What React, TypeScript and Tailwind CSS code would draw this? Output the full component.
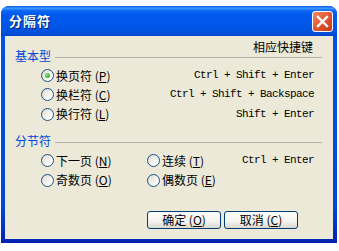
import React from "react";

const cjk = { fontFamily: "'Noto Sans CJK SC', 'Liberation Sans', sans-serif" };
const mono = { fontFamily: "'Liberation Mono', monospace" };

function Radio({ checked }: { checked?: boolean }) {
  return (
    <span className="w-[13px] h-[13px] shrink-0 rounded-full border border-[#1C5180] bg-[linear-gradient(135deg,#DCD9CD,#FFFFFF_80%)] flex items-center justify-center">
      {checked && <span className="w-[5px] h-[5px] rounded-full bg-[radial-gradient(circle_at_35%_35%,#7DE07D,#21A121)]" />}
    </span>
  );
}

function Opt({ label, k, checked }: { label: string; k: string; checked?: boolean }) {
  return (
    <div className="flex items-center gap-[2px]">
      <Radio checked={checked} />
      <span className="text-[12px] leading-[14px] text-black whitespace-nowrap">
        {label} (<u>{k}</u>)
      </span>
    </div>
  );
}

function Header({ text }: { text: string }) {
  return (
    <div className="flex items-center h-[12px] pl-[10px] pr-[11px]">
      <span className="text-[12px] leading-[12px] text-[#0046D5] whitespace-nowrap">{text}</span>
      <span className="flex-1 ml-[4px] mt-[2px] h-[1px] bg-[#B5B4A4]" />
    </div>
  );
}

function Btn({ label, k }: { label: string; k: string }) {
  return (
    <button className="w-[74px] h-[18px] rounded-[3px] border border-[#003C74] bg-[linear-gradient(180deg,#FFFFFF,#F3F2EE_60%,#DCD8CC)] text-[12px] leading-[14px] text-black flex items-center justify-center">
      {label} (<u>{k}</u>)
    </button>
  );
}

export default function App() {
  return (
    <div className="w-[339px] h-[251px] bg-white overflow-hidden" style={cjk}>
      <div className="ml-[1px] mt-[6px] w-[336px] h-[237px] rounded-t-[8px] bg-[linear-gradient(180deg,#0055E5,#0048D6_85%,#0022B0)] flex flex-col overflow-hidden">
        <div className="h-[30px] shrink-0 flex items-center justify-between pl-[8px] pr-[4px] bg-[linear-gradient(180deg,#0A5FEA_0%,#3D95FF_8%,#0A66F5_16%,#0058EE_30%,#0055E5_70%,#0050DC_88%,#0046CB_100%)]">
          <span className="text-[13px] font-bold text-white [text-shadow:1px_1px_0_#0A1E6E] tracking-[1px]">分隔符</span>
          <div className="w-[21px] h-[21px] mt-[1px] rounded-[3px] border border-white bg-[linear-gradient(135deg,#F08B6B,#E35A36_45%,#C2391B)] flex items-center justify-center">
            <svg width="13" height="13" viewBox="0 0 13 13">
              <path d="M2 2 L11 11 M11 2 L2 11" stroke="white" strokeWidth="2.4" strokeLinecap="square" />
            </svg>
          </div>
        </div>
        <div className="mx-[4px] mb-[4px] flex-1 bg-[#ECE9D8] flex flex-col pt-[5px]">
          <div className="h-[9px] flex justify-end pr-[20px]">
            <span className="text-[12px] leading-[12px] text-black">相应快捷键</span>
          </div>
          <Header text="基本型" />
          <div className="flex flex-col mt-[4px] pl-[36px] pr-[19px]">
            <div className="h-[19px] flex items-center justify-between">
              <Opt label="换页符" k="P" checked />
              <span className="text-[11px] tracking-[-0.6px] text-black" style={mono}>Ctrl + Shift + Enter</span>
            </div>
            <div className="h-[19px] flex items-center justify-between">
              <Opt label="换栏符" k="C" />
              <span className="text-[11px] tracking-[-0.6px] text-black" style={mono}>Ctrl + Shift + Backspace</span>
            </div>
            <div className="h-[20px] flex items-center justify-between">
              <Opt label="换行符" k="L" />
              <span className="text-[11px] tracking-[-0.6px] text-black" style={mono}>Shift + Enter</span>
            </div>
          </div>
          <div className="mt-[11px]">
            <Header text="分节符" />
          </div>
          <div className="flex flex-col mt-[4px] pl-[36px] pr-[19px]">
            <div className="h-[19px] flex items-center">
              <div className="w-[106px]"><Opt label="下一页" k="N" /></div>
              <Opt label="连续" k="T" />
              <span className="ml-auto text-[11px] tracking-[-0.6px] text-black" style={mono}>Ctrl + Enter</span>
            </div>
            <div className="h-[20px] flex items-center">
              <div className="w-[106px]"><Opt label="奇数页" k="O" /></div>
              <Opt label="偶数页" k="E" />
            </div>
          </div>
          <div className="flex justify-end gap-[3px] pr-[35px] mt-[21px]">
            <Btn label="确定" k="O" />
            <Btn label="取消" k="C" />
          </div>
        </div>
      </div>
    </div>
  );
}
